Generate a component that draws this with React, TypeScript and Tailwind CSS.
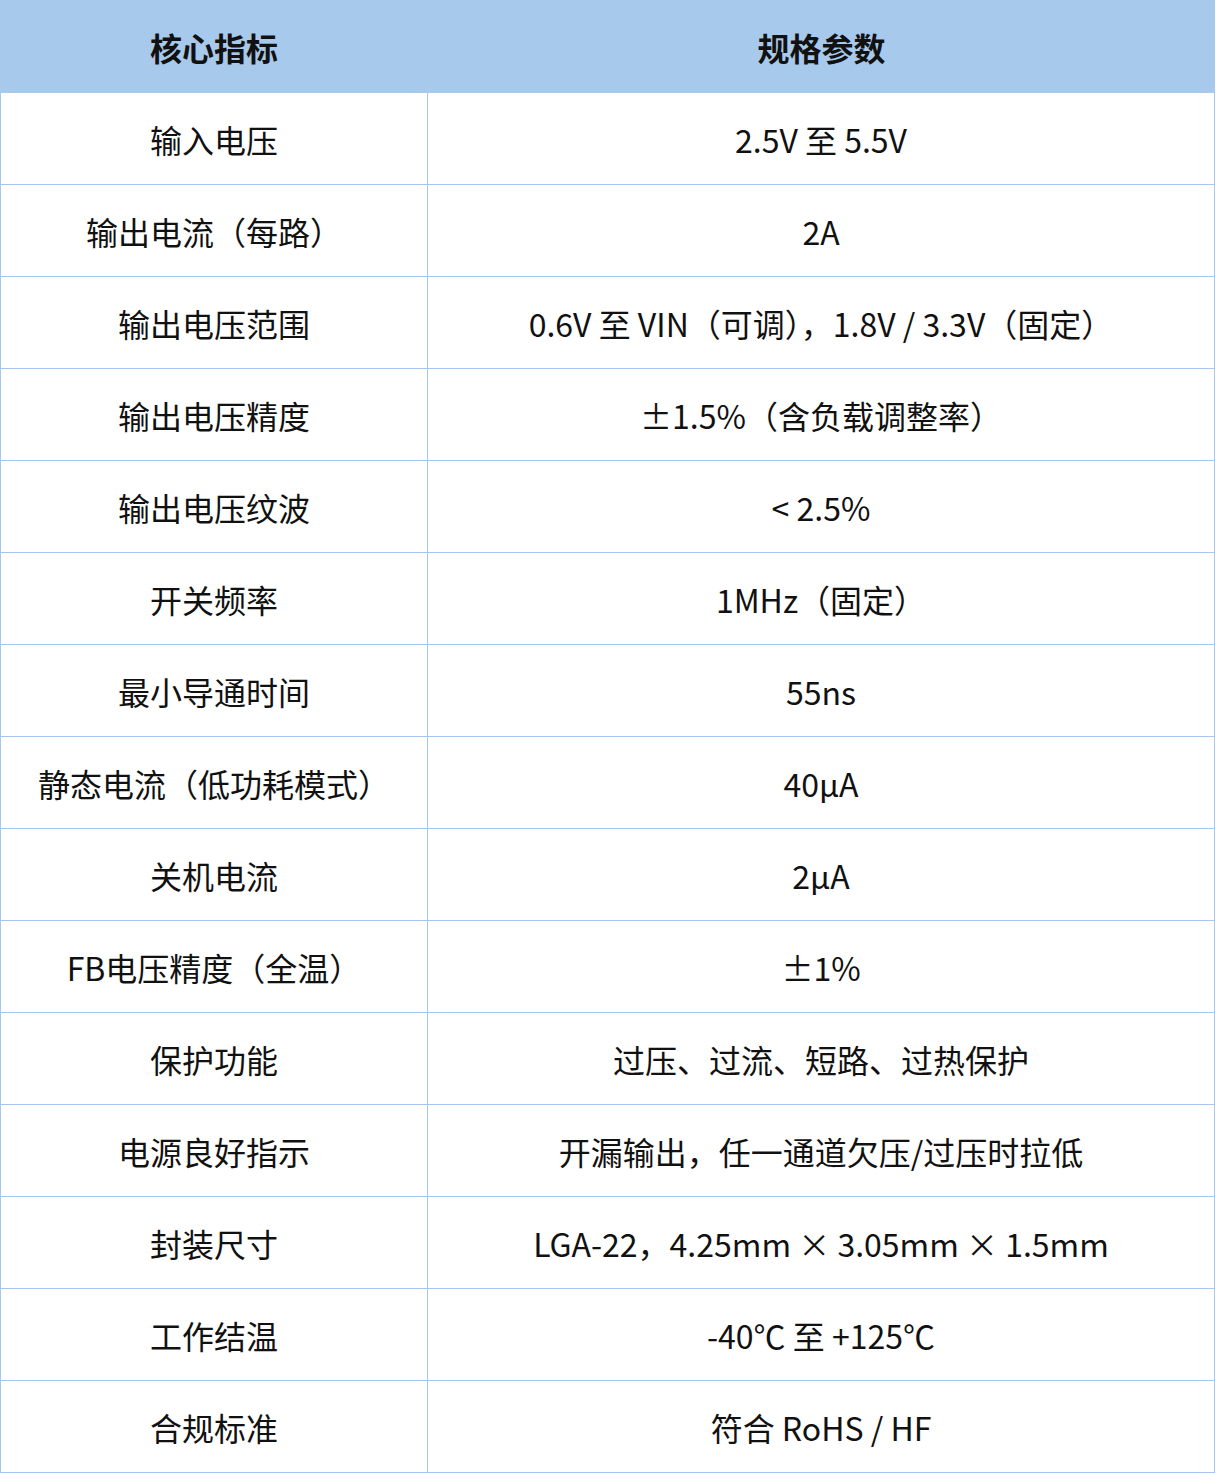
const rows: [string, string][] = [
  ['输入电压', '2.5V 至 5.5V'],
  ['输出电流（每路）', '2A'],
  ['输出电压范围', '0.6V 至 VIN（可调），1.8V / 3.3V（固定）'],
  ['输出电压精度', '±1.5%（含负载调整率）'],
  ['输出电压纹波', '< 2.5%'],
  ['开关频率', '1MHz（固定）'],
  ['最小导通时间', '55ns'],
  ['静态电流（低功耗模式）', '40μA'],
  ['关机电流', '2μA'],
  ['FB电压精度（全温）', '±1%'],
  ['保护功能', '过压、过流、短路、过热保护'],
  ['电源良好指示', '开漏输出，任一通道欠压/过压时拉低'],
  ['封装尺寸', 'LGA-22，4.25mm × 3.05mm × 1.5mm'],
  ['工作结温', '-40℃ 至 +125℃'],
  ['合规标准', '符合 RoHS / HF'],
];

export default function App() {
  return (
    <div
      className="w-[1215px] bg-white text-[#111] text-[32px]"
      style={{ fontFamily: '"Noto Sans CJK SC", "Noto Sans", sans-serif' }}
    >
      <div className="grid grid-cols-[428px_1fr] h-[93px] bg-[#a7c9eb] font-bold">
        <div className="flex items-center justify-center">核心指标</div>
        <div className="flex items-center justify-center">规格参数</div>
      </div>
      <div className="border-l border-[#a6c8ee]">
        {rows.map(([k, v]) => (
          <div key={k} className="grid grid-cols-[427px_1fr] h-[92px] border-b border-[#a6c8ee]">
            <div className="flex items-center justify-center border-r border-[#a6c8ee]">{k}</div>
            <div className="flex items-center justify-center border-r border-[#a6c8ee]">{v}</div>
          </div>
        ))}
      </div>
    </div>
  );
}
